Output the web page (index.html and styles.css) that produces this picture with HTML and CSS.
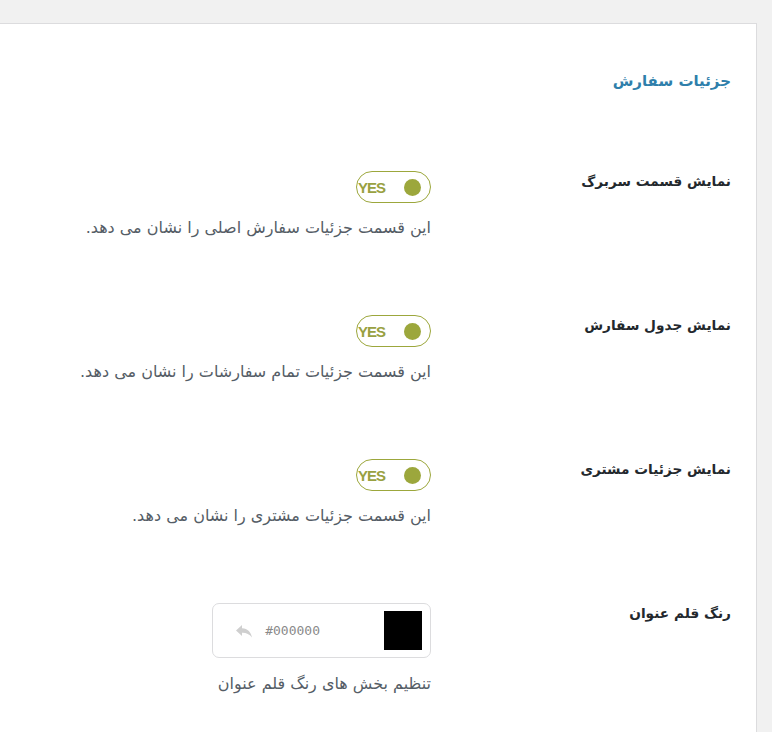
FILE: index.html
```html
<!DOCTYPE html>
<html lang="fa" dir="rtl">
<head>
<meta charset="utf-8">
<title>جزئیات سفارش</title>
<link rel="stylesheet" href="styles.css">
</head>
<body>
<div class="panel">
  <h2 class="section-title">جزئیات سفارش</h2>

  <div class="row">
    <div class="label">نمایش قسمت سربرگ</div>
    <div class="field">
      <div class="toggle"><span class="toggle-text">YES</span><span class="knob"></span></div>
      <p class="desc">این قسمت جزئیات سفارش اصلی را نشان می دهد.</p>
    </div>
  </div>

  <div class="row">
    <div class="label">نمایش جدول سفارش</div>
    <div class="field">
      <div class="toggle"><span class="toggle-text">YES</span><span class="knob"></span></div>
      <p class="desc">این قسمت جزئیات تمام سفارشات را نشان می دهد.</p>
    </div>
  </div>

  <div class="row">
    <div class="label">نمایش جزئیات مشتری</div>
    <div class="field">
      <div class="toggle"><span class="toggle-text">YES</span><span class="knob"></span></div>
      <p class="desc">این قسمت جزئیات مشتری را نشان می دهد.</p>
    </div>
  </div>

  <div class="row">
    <div class="label">رنگ قلم عنوان</div>
    <div class="field">
      <div class="color-box">
        <span class="swatch"></span>
        <span class="hex">#000000</span>
        <svg class="undo" viewBox="0 0 18 14" width="18" height="14"><path d="M7 1 L1 6.5 L7 12 V8.8 C11 8.6 14.2 10 17 13.5 C16.2 8.5 12.8 4.6 7 4.3 Z" fill="#cfcfcf"/></svg>
      </div>
      <p class="desc desc-color">تنظیم بخش های رنگ قلم عنوان</p>
    </div>
  </div>
</div>
</body>
</html>
```
FILE: styles.css
```css
html, body {
  margin: 0;
  padding: 0;
}
body {
  background: #f1f1f1;
  font-family: "DejaVu Sans", "Noto Sans", sans-serif;
  height: 732px;
  overflow: hidden;
}
.panel {
  margin-top: 23px;
  margin-right: 15px;
  width: 757px;
  height: 720px;
  background: #fff;
  border-top: 1px solid #dcdcde;
  border-right: 1px solid #dcdcde;
  box-sizing: border-box;
  padding: 45px 25px 0 0;
}
.section-title {
  margin: 0 0 40px 0;
  font-size: 15px;
  line-height: 24px;
  font-weight: bold;
  color: #2f7fab;
}
.row {
  display: grid;
  grid-template-columns: 300px 1fr;
  padding: 38px 0 39px 0;
}
.label {
  font-size: 13.7px;
  line-height: 20px;
  font-weight: bold;
  color: #23282d;
}
.field {
  display: flex;
  flex-direction: column;
  align-items: flex-start;
}
.toggle {
  direction: ltr;
  width: 75px;
  height: 32px;
  box-sizing: border-box;
  border: 1px solid #9ca73c;
  border-radius: 16px;
  display: flex;
  align-items: center;
  justify-content: space-between;
  padding: 0 9px 0 1px;
}
.toggle-text {
  font-family: "Liberation Sans", Arial, sans-serif;
  font-weight: bold;
  font-size: 15px;
  letter-spacing: -1px;
  color: #99a141;
}
.knob {
  width: 17px;
  height: 17px;
  border-radius: 50%;
  background: #9ca73c;
}
.desc {
  margin: 15px 0 0 0;
  font-size: 16px;
  line-height: 20px;
  color: #555d66;
}
.color-box {
  width: 219px;
  height: 55px;
  box-sizing: border-box;
  border: 1px solid #dcdcde;
  border-radius: 7px;
  display: flex;
  align-items: center;
  padding-right: 8px;
}
.swatch {
  width: 38px;
  height: 39px;
  background: #000;
}
.hex {
  direction: ltr;
  margin-right: 64px;
  font-family: "DejaVu Sans Mono", "Liberation Mono", monospace;
  font-size: 13px;
  color: #8a8a8a;
}
.undo {
  margin-right: 12px;
}
.desc.desc-color {
  margin-top: 16px;
}
```
